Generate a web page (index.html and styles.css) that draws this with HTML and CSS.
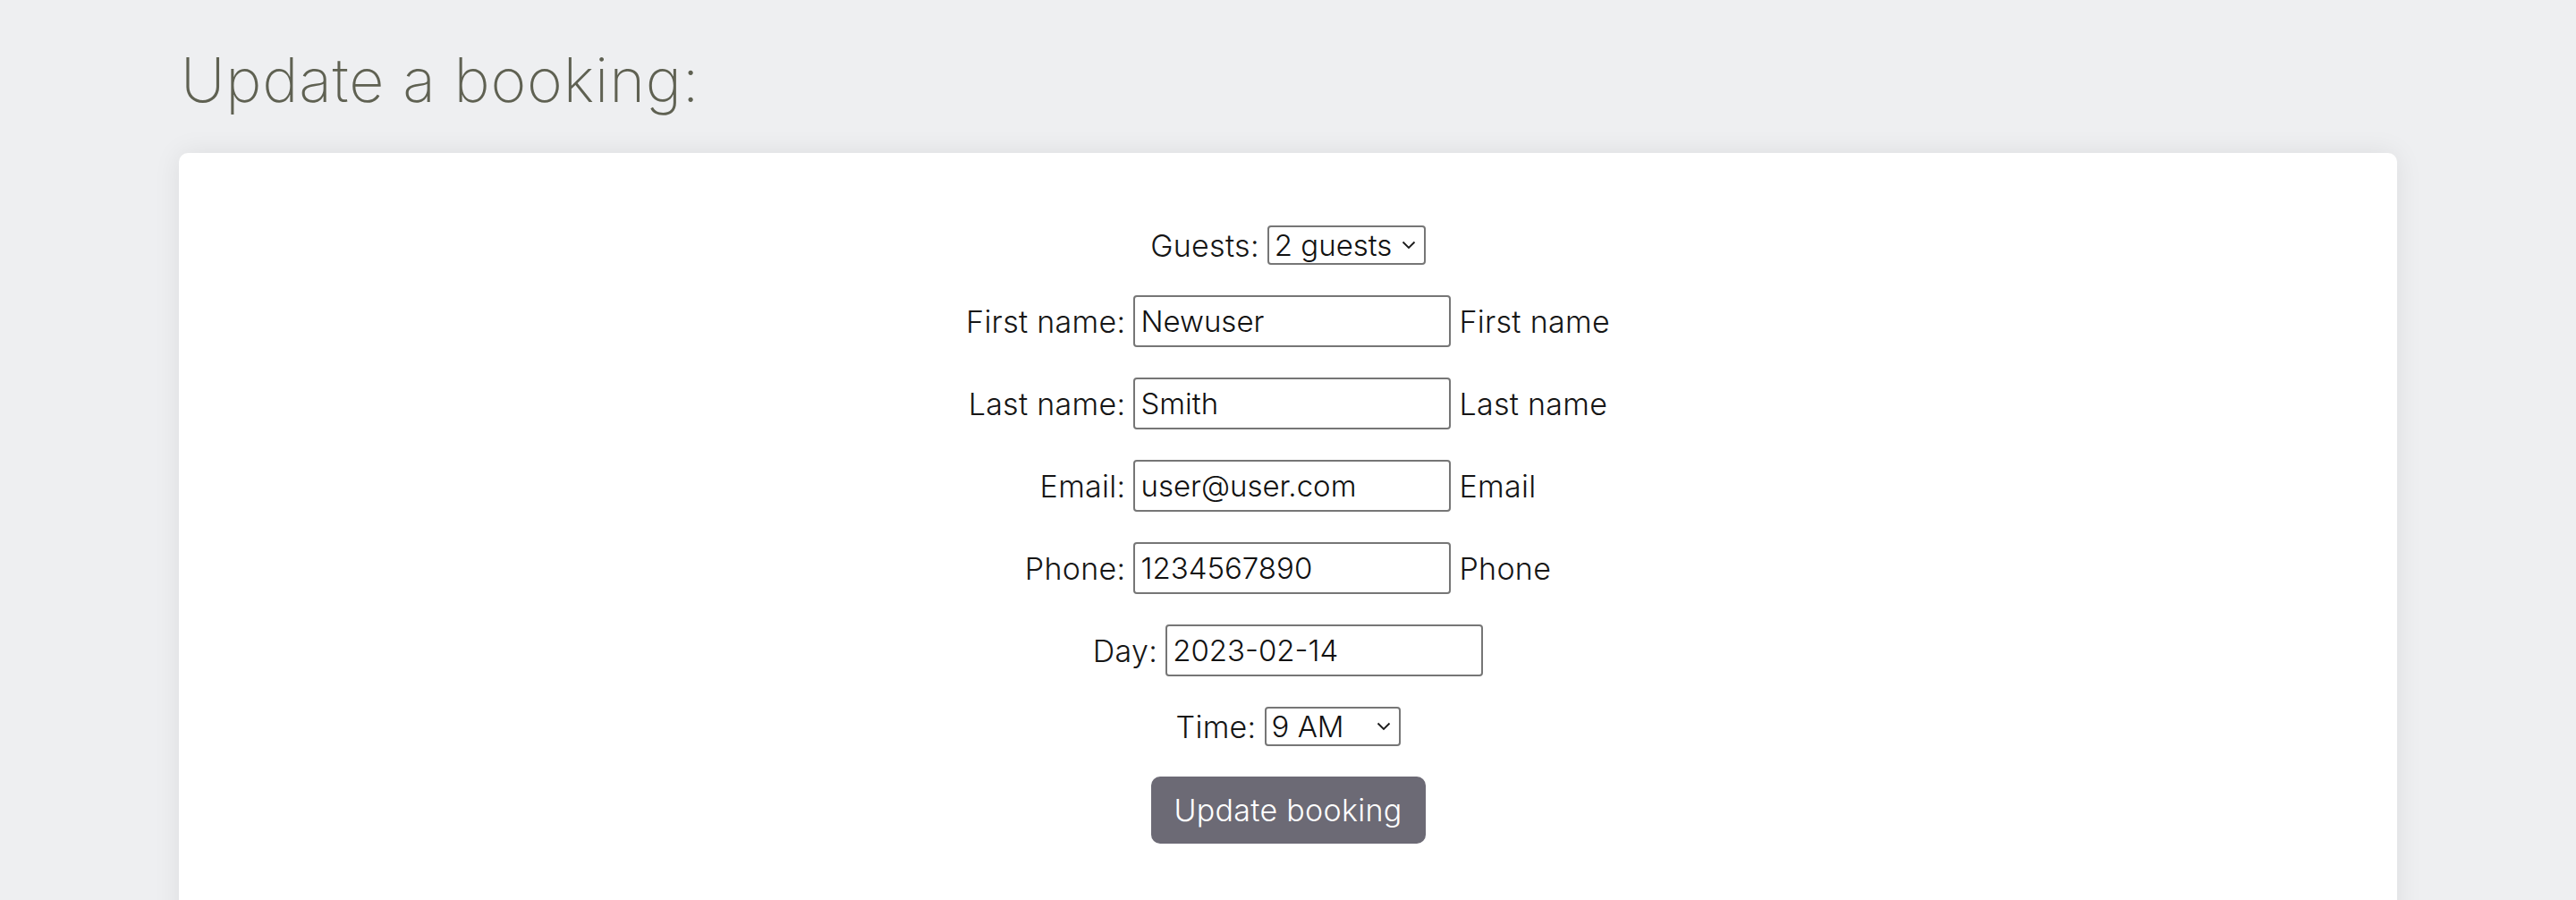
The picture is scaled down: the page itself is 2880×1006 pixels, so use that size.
FILE: index.html
```html
<!DOCTYPE html>
<html lang="en">
<head>
<meta charset="utf-8">
<title>Update a booking</title>
<link rel="stylesheet" href="styles.css">
</head>
<body>
<main class="page">
  <h1 class="title">Update a booking:</h1>
  <section class="card">
    <form class="form">
      <div class="row">
        <label class="label" for="guests">Guests:</label>
        <span class="select-wrap select-guests">
          <select id="guests" class="select">
            <option>2 guests</option>
          </select>
          <svg class="chev" viewBox="0 0 16 10" width="16" height="10"><path d="M1.5 1.5 L8 8 L14.5 1.5" fill="none" stroke="#1a1a1a" stroke-width="1.8"/></svg>
        </span>
      </div>
      <div class="row">
        <label class="label" for="fn">First name:</label>
        <input id="fn" class="input" type="text" value="Newuser">
        <span class="label">First name</span>
      </div>
      <div class="row">
        <label class="label" for="ln">Last name:</label>
        <input id="ln" class="input" type="text" value="Smith">
        <span class="label">Last name</span>
      </div>
      <div class="row">
        <label class="label" for="em">Email:</label>
        <input id="em" class="input" type="text" value="user@user.com">
        <span class="label">Email</span>
      </div>
      <div class="row">
        <label class="label" for="ph">Phone:</label>
        <input id="ph" class="input" type="text" value="1234567890">
        <span class="label">Phone</span>
      </div>
      <div class="row">
        <label class="label" for="day">Day:</label>
        <input id="day" class="input" type="text" value="2023-02-14">
      </div>
      <div class="row">
        <label class="label" for="time">Time:</label>
        <span class="select-wrap select-time">
          <select id="time" class="select">
            <option>9 AM</option>
          </select>
          <svg class="chev" viewBox="0 0 16 10" width="16" height="10"><path d="M1.5 1.5 L8 8 L14.5 1.5" fill="none" stroke="#1a1a1a" stroke-width="1.8"/></svg>
        </span>
      </div>
      <div class="row">
        <button type="button" class="button">Update booking</button>
      </div>
    </form>
  </section>
</main>
</body>
</html>
```
FILE: styles.css
```css
html, body {
  margin: 0;
  padding: 0;
  background: #eeeff1;
  overflow: hidden;
}

body {
  font-family: Inter, "Liberation Sans", sans-serif;
  color: #161616;
}

.page {
  padding: 0 200px;
}

.title {
  margin: 49px 0 42px 2px;
  font-size: 68px;
  line-height: 80px;
  font-weight: 200;
  color: #5f6152;
  letter-spacing: 0.8px;
}

.card {
  background: #ffffff;
  border-radius: 10px;
  box-shadow: 0 0 30px rgba(0, 0, 0, 0.08);
  padding: 81px 0 200px;
}

.form {
  display: flex;
  flex-direction: column;
  gap: 34px;
}

.row {
  display: flex;
  justify-content: center;
  align-items: center;
  gap: 9px;
}

.label {
  font-size: 34px;
  font-weight: 300;
  letter-spacing: 0.3px;
  color: #161616;
}

.input {
  box-sizing: border-box;
  width: 355px;
  height: 58px;
  border: 2px solid #767676;
  border-radius: 4px;
  padding: 0 6px;
  font-family: inherit;
  font-size: 33px;
  font-weight: 300;
  color: #111;
  background: #fff;
  outline: none;
}

.select-wrap {
  position: relative;
  display: inline-block;
}

.select {
  box-sizing: border-box;
  appearance: none;
  -webkit-appearance: none;
  height: 44px;
  border: 2px solid #767676;
  border-radius: 4px;
  padding: 0 6px;
  font-family: inherit;
  font-size: 33px;
  font-weight: 300;
  color: #111;
  background: #fff;
  display: block;
}

.select-guests .select { width: 177px; }
.select-time .select { width: 152px; }

.chev {
  position: absolute;
  right: 11px;
  top: 17px;
  pointer-events: none;
}

.button {
  box-sizing: border-box;
  width: 307px;
  height: 75px;
  border: none;
  border-radius: 10px;
  background: #6c6a75;
  color: #ffffff;
  font-family: inherit;
  font-size: 34px;
  font-weight: 300;
  letter-spacing: 0.3px;
}
```
